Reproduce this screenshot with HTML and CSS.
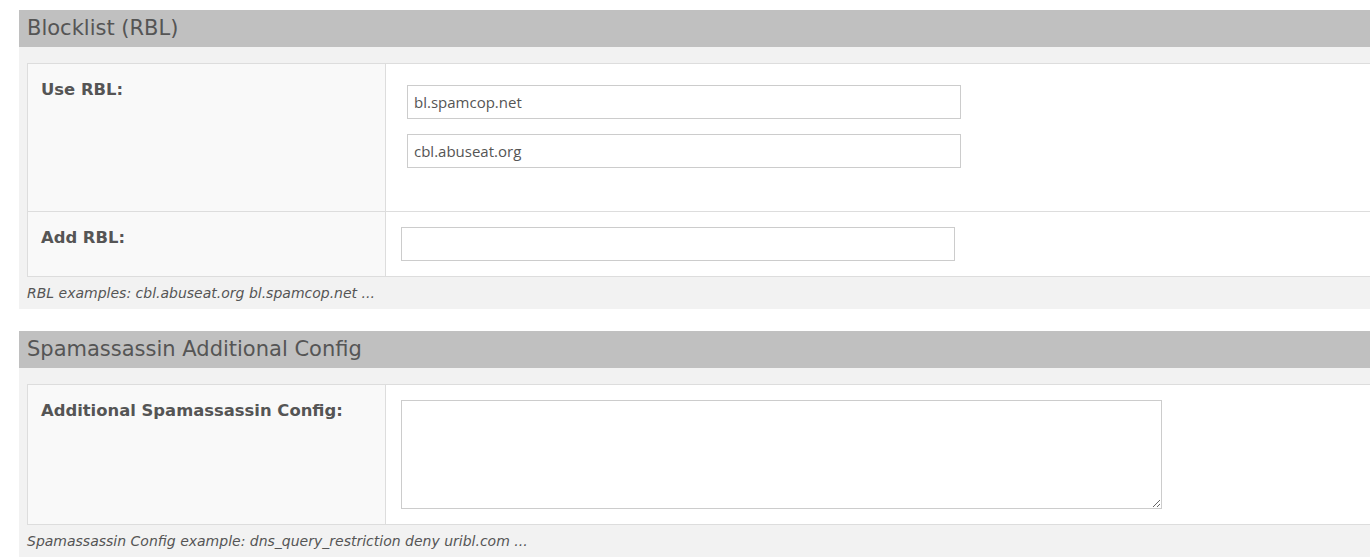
FILE: index.html
```
<!DOCTYPE html>
<html>
<head>
<meta charset="utf-8">
<link rel="stylesheet" href="styles.css">
</head>
<body>
<div class="page">
  <section class="panel">
    <h2 class="panel-title">Blocklist (RBL)</h2>
    <div class="panel-body">
      <div class="form-table">
        <div class="row row-first">
          <div class="label">Use RBL:</div>
          <div class="value">
            <div class="list">
              <input class="field" type="text" value="bl.spamcop.net">
              <input class="field" type="text" value="cbl.abuseat.org">
            </div>
          </div>
        </div>
        <div class="row">
          <div class="label">Add RBL:</div>
          <div class="value">
            <input class="field" type="text" value="">
          </div>
        </div>
      </div>
      <p class="help">RBL examples: cbl.abuseat.org bl.spamcop.net ...</p>
    </div>
  </section>
  <section class="panel">
    <h2 class="panel-title">Spamassassin Additional Config</h2>
    <div class="panel-body">
      <div class="form-table">
        <div class="row row-first">
          <div class="label">Additional Spamassassin Config:</div>
          <div class="value">
            <textarea class="area"></textarea>
          </div>
        </div>
      </div>
      <p class="help">Spamassassin Config example: dns_query_restriction deny uribl.com ...</p>
    </div>
  </section>
</div>
</body>
</html>
```
FILE: styles.css
```
html, body {
  margin: 0;
  padding: 0;
  overflow: hidden;
  background: #fff;
}
body {
  font-family: "DejaVu Sans", Verdana, sans-serif;
  color: #555;
}
.page {
  padding: 10px 0 0 19px;
  width: 1400px;
  display: flex;
  flex-direction: column;
  gap: 22px;
}
.panel {
  margin: 0;
}
.panel-title {
  margin: 0;
  height: 37px;
  line-height: 37px;
  padding-left: 8px;
  background: #c0c0c0;
  font-weight: normal;
  font-size: 21px;
  color: #555;
}
.panel-body {
  background: #f2f2f2;
  padding: 16px 8px 0 8px;
}
.form-table {
  border: 1px solid #ddd;
  border-right: none;
  background: #fff;
}
.row {
  display: grid;
  grid-template-columns: 358px 1fr;
  border-top: 1px solid #ddd;
}
.row-first {
  border-top: none;
}
.label {
  background: #f9f9f9;
  border-right: 1px solid #ddd;
  padding: 16px 13px;
  font-weight: bold;
  font-size: 16.4px;
  line-height: 20px;
}
.value {
  padding: 15px;
}
.list {
  display: flex;
  flex-direction: column;
  gap: 15px;
  padding: 6px 6px 28px 6px;
}
.field {
  box-sizing: border-box;
  width: 554px;
  height: 34px;
  border: 1px solid #ccc;
  border-radius: 0;
  padding: 0 6px;
  font-family: "Open Sans", "Noto Sans", sans-serif;
  font-size: 15px;
  color: #555;
  background: #fff;
  outline: none;
  margin: 0;
  display: block;
}
.area {
  display: block;
  box-sizing: border-box;
  width: 761px;
  height: 109px;
  border: 1px solid #ccc;
  border-radius: 0;
  margin: 0;
  background: #fff;
  font-family: "Open Sans", sans-serif;
}
.help {
  margin: 0;
  padding: 6px 0 6px 0;
  font-size: 14px;
  line-height: 20px;
  font-style: italic;
  color: #555;
}
```
